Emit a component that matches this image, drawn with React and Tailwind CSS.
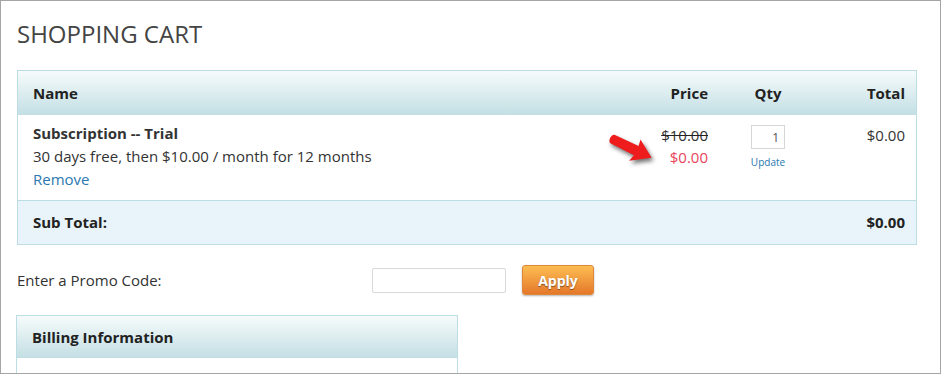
import React from 'react';

function RedArrow() {
  return (
    <svg
      width="52"
      height="34"
      viewBox="0 0 52 34"
      className="absolute left-[18px] top-[18px] drop-shadow-[2px_3px_2px_rgba(0,0,0,0.55)]"
    >
      <g transform="translate(7 6) rotate(26)">
        <path
          d="M0 -4.5 C -4 -4.5 -4 5 0 5 L 26 5.5 L 24 12.5 L 43 0 L 25 -11.5 L 26 -5 Z"
          fill="#ee1c1c"
        />
      </g>
    </svg>
  );
}

export default function App() {
  return (
    <div className="w-[941px] h-[374px] border border-[#a5a5a5] bg-white overflow-hidden px-[16px] font-['Open_Sans',sans-serif] text-[#333]">
      {/* Title */}
      <h1 className="pt-[17px] text-[24px] leading-[32px] text-[#444] font-normal">SHOPPING CART</h1>

      {/* Cart table */}
      <div className="mt-[20px] w-[900px] border border-[#bddde4]">
        <div className="flex h-[44px] items-center bg-gradient-to-b from-[#f6fbfb] to-[#c3dfe4] text-[15px] font-bold text-[#222]">
          <div className="flex-1 pl-[15px]">Name</div>
          <div className="w-[140px] pr-[20px] text-right">Price</div>
          <div className="w-[80px] text-center">Qty</div>
          <div className="w-[108px] pr-[11px] text-right">Total</div>
        </div>

        <div className="flex h-[85px] text-[15px] leading-[23px]">
          <div className="flex-1 pl-[15px] pt-[7px]">
            <div className="font-bold text-[#333]">Subscription -- Trial</div>
            <div>30 days free, then $10.00 / month for 12 months</div>
            <a href="#" className="text-[#2b78b0]">Remove</a>
          </div>
          <div className="relative w-[140px] pr-[20px] pt-[9px] text-right leading-[22px]">
            <RedArrow />
            <div className="line-through decoration-[#222] text-[#333]">$10.00</div>
            <div className="text-[#e8455b]">$0.00</div>
          </div>
          <div className="flex w-[80px] flex-col items-center pt-[10px]">
            <input
              defaultValue="1"
              className="h-[24px] w-[34px] border border-[#d6d6d6] pr-[5px] text-right text-[12px] text-[#555] outline-none"
            />
            <a href="#" className="mt-[6px] text-[10px] leading-[14px] text-[#2b78b0]">Update</a>
          </div>
          <div className="w-[108px] pr-[11px] pt-[9px] text-right leading-[22px]">$0.00</div>
        </div>

        <div className="flex h-[44px] items-center border-t border-[#bddde4] bg-[#e8f4fa] text-[15px] font-bold text-[#222]">
          <div className="flex-1 pl-[15px]">Sub Total:</div>
          <div className="pr-[11px]">$0.00</div>
        </div>
      </div>

      {/* Promo code */}
      <div className="mt-[20px] flex h-[30px] items-center text-[15px]">
        <label className="w-[355px] text-[#333]">Enter a Promo Code:</label>
        <input className="h-[25px] w-[134px] rounded-[2px] border border-[#d9d9d9] outline-none" />
        <button className="ml-[16px] h-[30px] w-[72px] rounded-[3px] border border-[#e0883a] bg-gradient-to-b from-[#fdbd52] to-[#e4782a] text-[14px] font-bold text-white shadow-[0_1px_2px_rgba(0,0,0,0.3)] [text-shadow:0_1px_1px_rgba(0,0,0,0.45)]">
          Apply
        </button>
      </div>

      {/* Billing */}
      <div className="mt-[20px] -ml-px w-[442px] border border-[#bddde4]">
        <div className="flex h-[42px] items-center bg-gradient-to-b from-[#f6fbfb] to-[#c3dfe4] pl-[15px] text-[15px] font-bold text-[#222]">
          Billing Information
        </div>
        <div className="h-[40px] bg-white"></div>
      </div>
    </div>
  );
}
